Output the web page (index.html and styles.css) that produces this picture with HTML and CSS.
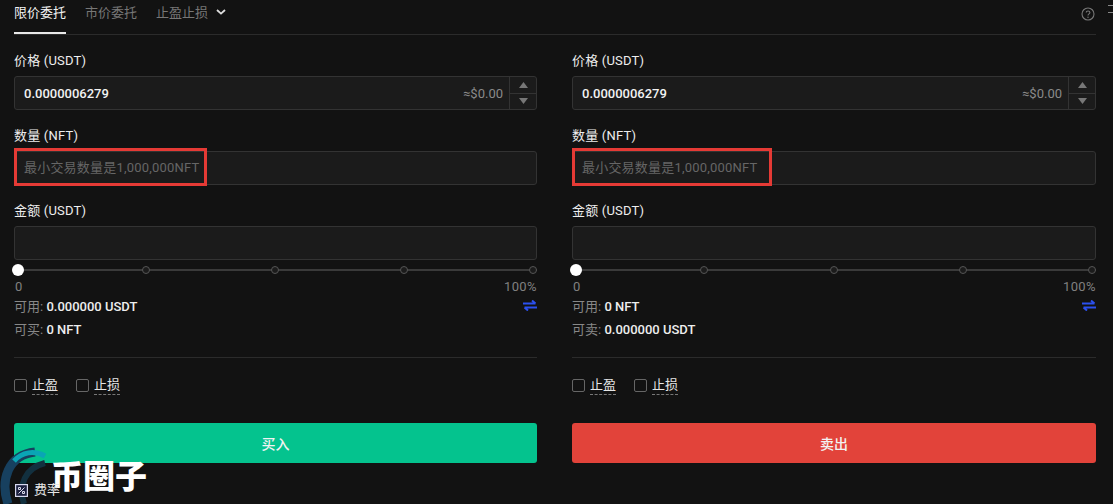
FILE: index.html
```html
<!DOCTYPE html>
<html lang="zh-cn">

<head>
    <meta charset="UTF-8">
    <meta name="viewport" content="width=device-width, initial-scale=1.0">
    <title>限价委托</title>
    <link rel="stylesheet" href="styles.css">
</head>

<body>
    <main class="panel">
        <div class="tabs">
            <span class="tab tab_active">限价委托</span>
            <span class="tab">市价委托</span>
            <span class="tab">止盈止损
                <svg class="chevron" width="10" height="6" viewBox="0 0 10 6"><path d="M1 1l4 3.6L9 1" fill="none" stroke="#ddd" stroke-width="1.8"/></svg>
            </span>
            <svg class="help" width="14" height="14" viewBox="0 0 14 14">
                <circle cx="7" cy="7" r="6" fill="none" stroke="#777" stroke-width="1.1"/>
                <path d="M5.2 5.6C5.2 3.4 8.9 3.5 8.9 5.5 8.9 6.9 7 6.8 7 8.4" fill="none" stroke="#777" stroke-width="1.1"/>
                <circle cx="7" cy="10.2" r=".7" fill="#777"/>
            </svg>
        </div>
        <div class="side_lines"></div>
        <div class="forms">
            <section class="form">
                <div class="field">
                    <label class="label">价格 (USDT)</label>
                    <div class="box">
                        <span class="value">0.0000006279</span>
                        <span class="usd">≈$0.00</span>
                        <div class="stepper">
                            <span class="step"><svg width="9" height="6" viewBox="0 0 9 6"><path d="M4.5 0L9 6H0z" fill="#777"/></svg></span>
                            <span class="step"><svg width="9" height="6" viewBox="0 0 9 6"><path d="M4.5 6L0 0h9z" fill="#777"/></svg></span>
                        </div>
                    </div>
                </div>
                <div class="field">
                    <label class="label">数量 (NFT)</label>
                    <div class="box">
                        <span class="placeholder">最小交易数量是1,000,000NFT</span>
                        <div class="mark mark_buy"></div>
                    </div>
                </div>
                <div class="field">
                    <label class="label">金额 (USDT)</label>
                    <div class="box"></div>
                </div>
                <div class="slider">
                    <span class="knob"></span>
                    <span class="dot"></span><span class="dot"></span><span class="dot"></span><span class="dot"></span>
                </div>
                <div class="scale"><span>0</span><span>100%</span></div>
                <div class="info">
                    <span><span class="muted">可用:</span> 0.000000 USDT</span>
                    <svg class="swap" width="14" height="11" viewBox="0 0 14 11"><path d="M0 3.500h12.500M9 .5l3.500 3M14 7.500H1.500M5 10.500l-3.500-3" fill="none" stroke="#2b50ee" stroke-width="2"/></svg>
                </div>
                <div class="info info_second"><span><span class="muted">可买:</span> 0 NFT</span></div>
                <div class="checks">
                    <span class="check"><i class="tick"></i><span class="dashed">止盈</span></span>
                    <span class="check"><i class="tick"></i><span class="dashed">止损</span></span>
                </div>
                <button class="action buy">买入</button>
            </section>
            <section class="form">
                <div class="field">
                    <label class="label">价格 (USDT)</label>
                    <div class="box">
                        <span class="value">0.0000006279</span>
                        <span class="usd">≈$0.00</span>
                        <div class="stepper">
                            <span class="step"><svg width="9" height="6" viewBox="0 0 9 6"><path d="M4.5 0L9 6H0z" fill="#777"/></svg></span>
                            <span class="step"><svg width="9" height="6" viewBox="0 0 9 6"><path d="M4.5 6L0 0h9z" fill="#777"/></svg></span>
                        </div>
                    </div>
                </div>
                <div class="field">
                    <label class="label">数量 (NFT)</label>
                    <div class="box">
                        <span class="placeholder">最小交易数量是1,000,000NFT</span>
                        <div class="mark mark_sell"></div>
                    </div>
                </div>
                <div class="field">
                    <label class="label">金额 (USDT)</label>
                    <div class="box"></div>
                </div>
                <div class="slider">
                    <span class="knob"></span>
                    <span class="dot"></span><span class="dot"></span><span class="dot"></span><span class="dot"></span>
                </div>
                <div class="scale"><span>0</span><span>100%</span></div>
                <div class="info">
                    <span><span class="muted">可用:</span> 0 NFT</span>
                    <svg class="swap" width="14" height="11" viewBox="0 0 14 11"><path d="M0 3.500h12.500M9 .5l3.500 3M14 7.500H1.500M5 10.500l-3.500-3" fill="none" stroke="#2b50ee" stroke-width="2"/></svg>
                </div>
                <div class="info info_second"><span><span class="muted">可卖:</span> 0.000000 USDT</span></div>
                <div class="checks">
                    <span class="check"><i class="tick"></i><span class="dashed">止盈</span></span>
                    <span class="check"><i class="tick"></i><span class="dashed">止损</span></span>
                </div>
                <button class="action sell">卖出</button>
            </section>
        </div>
        <div class="watermark">
            <svg class="watermark_logo" width="54" height="60" viewBox="0 0 54 60">
                <path d="M8 60C0 36 8 11 35 8" fill="none" stroke="#17405f" stroke-width="9"/>
                <path d="M24 60C18 41 25 24 45 19" fill="none" stroke="#12303f" stroke-width="6"/>
                <path d="M14 17C22 8 34 6 45 12" fill="none" stroke="#0aa5b5" stroke-width="5"/>
            </svg>
            <span class="watermark_text">币圈子</span>
        </div>
        <div class="fee">
            <svg width="13" height="13" viewBox="0 0 13 13">
                <rect x=".6" y=".6" width="11.800" height="11.800" fill="#1d2140" stroke="#d8d8ee" stroke-width="1.200"/>
                <path d="M3.500 9.500l6-6M3.500 3.500h2v2h-2zM7.500 7.500h2v2h-2z" fill="none" stroke="#dde" stroke-width="1"/>
            </svg>
            <span>费率</span>
        </div>
    </main>
</body>

</html>
```

FILE: styles.css
```css
html, body {
    margin: 0;
    padding: 0;
    height: 100%;
    overflow: hidden;
    background-color: #121212;
}

body {
    font-family: Roboto, "Noto Sans CJK SC", sans-serif;
    font-size: 13px;
    color: #e6e6e6;
}

.panel {
    position: relative;
    height: 504px;
    padding: 0 17px 0 14px;
    box-sizing: border-box;
}

.tabs {
    display: flex;
    align-items: flex-start;
    gap: 19px;
    height: 35px;
    box-sizing: border-box;
    border-bottom: 1px solid #2b2b2b;
}

.tab {
    height: 34px;
    box-sizing: border-box;
    padding-top: 4px;
    line-height: 18px;
    color: #777;
    white-space: nowrap;
}

.tab_active {
    color: #f2f2f2;
    border-bottom: 2px solid #e8e8e8;
}

.chevron {
    margin-left: 5px;
    vertical-align: 2px;
}

.help {
    margin: 7px 1px 0 auto;
}

/* the two lines cut off by the right edge */
.side_lines {
    position: absolute;
    top: 5px;
    right: 0;
    width: 5px;
    height: 6px;
    border-top: 1px solid #888;
    border-bottom: 1px solid #888;
}

.forms {
    display: grid;
    grid-template-columns: 523px 524px;
    gap: 35px;
    padding-top: 16px;
}

.field {
    margin-bottom: 16px;
}

.field:nth-child(3) {
    margin-bottom: 0;
}

.label {
    display: block;
    height: 20px;
    line-height: 20px;
    margin-bottom: 5px;
    letter-spacing: .2px;
    color: #eee;
}

.box {
    position: relative;
    display: flex;
    align-items: center;
    height: 34px;
    box-sizing: border-box;
    padding-left: 9px;
    border: 1px solid #333;
    border-radius: 3px;
    background-color: #1b1b1b;
}

.value {
    font-weight: 500;
    color: #f2f2f2;
}

.usd {
    margin-left: auto;
    margin-right: 6px;
    color: #8a8a8a;
}

.stepper {
    display: flex;
    flex-direction: column;
    width: 26px;
    height: 100%;
    border-left: 1px solid #333;
}

.step {
    flex: 1;
    display: flex;
    align-items: center;
    justify-content: center;
}

.step:first-child {
    border-bottom: 1px solid #333;
}

.placeholder {
    padding-bottom: 3px;
    letter-spacing: .2px;
    color: #666;
}

.mark {
    position: absolute;
    top: -4px;
    left: -1px;
    height: 38px;
    box-sizing: border-box;
    border: 3px solid #e53a35;
}

.mark_buy {
    width: 193px;
}

.mark_sell {
    width: 200px;
}

.slider {
    position: relative;
    display: flex;
    justify-content: space-between;
    align-items: center;
    height: 10px;
    margin-top: 5px;
    background: linear-gradient(#3a3a3a, #3a3a3a) center / 100% 2px no-repeat;
}

.dot {
    width: 6px;
    height: 6px;
    border: 1px solid #555;
    border-radius: 50%;
    background-color: #1b1b1b;
}

.knob {
    width: 12px;
    height: 12px;
    margin-left: -2px;
    margin-right: -3px;
    border-radius: 50%;
    background-color: #fff;
}

.scale {
    display: flex;
    justify-content: space-between;
    height: 18px;
    line-height: 18px;
    margin-top: 3px;
    padding-left: 1px;
    letter-spacing: .4px;
    color: #808080;
}

.info {
    display: flex;
    justify-content: space-between;
    align-items: center;
    height: 20px;
    margin-top: -1px;
    font-weight: 500;
    color: #eee;
}

.info_second {
    margin-top: 3px;
    padding-bottom: 19px;
    border-bottom: 1px solid #2b2b2b;
}

.muted {
    font-weight: 400;
    color: #888;
}

.checks {
    display: flex;
    gap: 18px;
    margin-top: 16px;
    height: 22px;
}

.check {
    display: flex;
    align-items: center;
    gap: 5px;
}

.tick {
    width: 11px;
    height: 11px;
    border: 1px solid #666;
    border-radius: 2px;
}

.dashed {
    line-height: 18px;
    border-bottom: 1px dashed #777;
}

.action {
    display: block;
    width: 100%;
    height: 40px;
    margin-top: 27px;
    border: 0;
    border-radius: 3px;
    font-family: inherit;
    font-size: 14px;
    font-weight: 500;
    color: #f2f2f2;
}

.buy {
    background-color: #04c38e;
}

.sell {
    background-color: #e2433a;
}

.fee {
    position: absolute;
    left: 15px;
    top: 483px;
    display: flex;
    align-items: center;
    gap: 6px;
    line-height: 14px;
}

.watermark {
    position: absolute;
    left: 0;
    top: 444px;
    width: 150px;
    height: 60px;
}

.watermark_logo {
    position: absolute;
    left: 0;
    top: 0;
}

.watermark_text {
    position: absolute;
    left: 51px;
    top: 11px;
    font-family: "Noto Sans CJK SC", sans-serif;
    font-size: 32px;
    font-weight: 900;
    line-height: 38px;
    color: #fff;
}
```
